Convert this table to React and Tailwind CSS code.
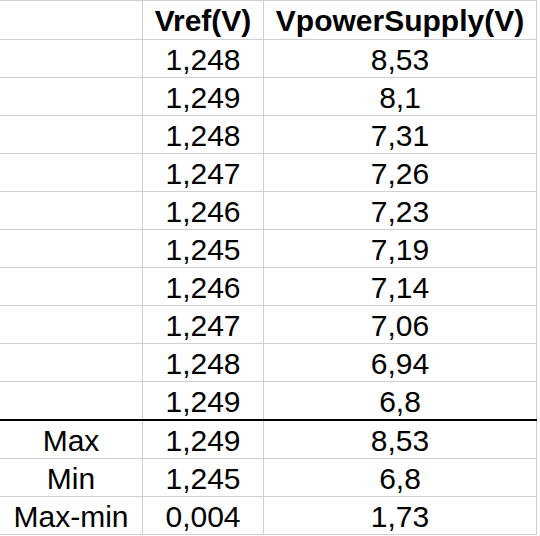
import React from 'react';

const rows = [
  ['', '1,248', '8,53'],
  ['', '1,249', '8,1'],
  ['', '1,248', '7,31'],
  ['', '1,247', '7,26'],
  ['', '1,246', '7,23'],
  ['', '1,245', '7,19'],
  ['', '1,246', '7,14'],
  ['', '1,247', '7,06'],
  ['', '1,248', '6,94'],
  ['', '1,249', '6,8'],
];

const summary = [
  ['Max', '1,249', '8,53'],
  ['Min', '1,245', '6,8'],
  ['Max-min', '0,004', '1,73'],
];

function Row({ cells, bold, height = 'h-[38px]', bottom = 'border-b border-[#cfcfcf]' }) {
  return (
    <div className={`flex ${height} ${bottom}`}>
      {cells.map((c, i) => (
        <div
          key={i}
          className={`flex items-center justify-center pt-[2px] border-r border-[#cfcfcf] ${
            i === 0 ? 'w-[143px]' : i === 1 ? 'w-[121px]' : 'w-[273px]'
          } ${bold ? 'font-bold' : ''}`}
        >
          {c}
        </div>
      ))}
    </div>
  );
}

export default function App() {
  return (
    <div className="w-[540px] h-[536px] bg-white overflow-hidden text-black text-[30px] leading-none font-['Liberation_Sans',Arial,sans-serif]">
      <div className="w-[537px] border-t border-[#cfcfcf]">
        <Row cells={['', 'Vref(V)', 'VpowerSupply(V)']} bold height="h-[39px]" />
        {rows.map((r, i) => (
          <Row
            key={i}
            cells={r}
            bottom={i === rows.length - 1 ? 'border-b-2 border-b-black' : 'border-b border-[#cfcfcf]'}
            height={i === rows.length - 1 ? 'h-[39px]' : 'h-[38px]'}
          />
        ))}
        {summary.map((r, i) => (
          <Row key={i} cells={r} />
        ))}
      </div>
    </div>
  );
}
